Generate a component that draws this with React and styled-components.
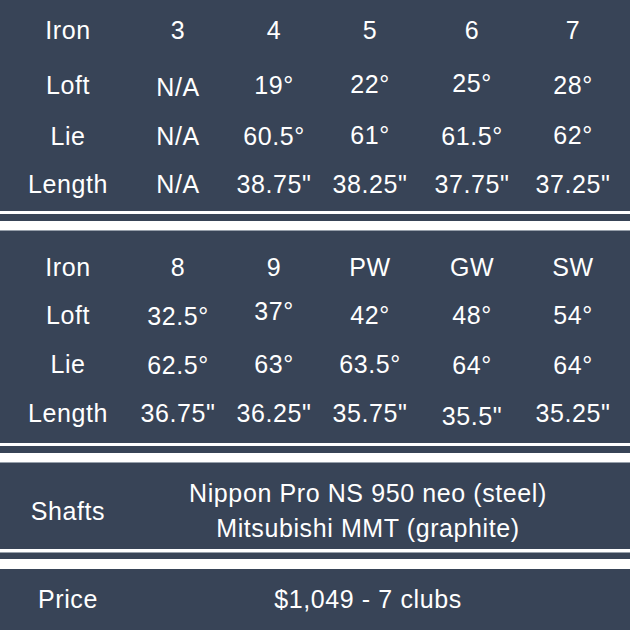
import React from "react";
import styled, { createGlobalStyle } from "styled-components";

const BG = "#384457";
const EDGE = "#97a0ab";

const Global = createGlobalStyle`
  html, body { margin: 0; padding: 0; background: ${BG}; }
  body { font-family: "Liberation Sans", Arial, sans-serif; }
`;

const Page = styled.div`
  width: 630px;
  height: 630px;
  background: ${BG};
  color: #ffffff;
  display: flex;
  flex-direction: column;
  overflow: hidden;
  font-family: "Liberation Sans", Arial, sans-serif;
  font-size: 25px;
  letter-spacing: 0.6px;
`;

const SpecTable = styled.div`
  flex: none;
  display: flex;
  flex-direction: column;
  box-sizing: border-box;
  height: ${(p) => p.$h}px;
  padding-top: ${(p) => p.$pt}px;
`;

const SpecRow = styled.div`
  flex: none;
  display: grid;
  grid-template-columns: 136px 84px 108px 84px 120px 82px;
  height: ${(p) => p.$h}px;
`;

const Cell = styled.div`
  display: flex;
  align-items: center;
  justify-content: center;
  white-space: nowrap;
  ${(p) => (p.$shift > 0 ? `padding-top: ${p.$shift * 2}px;` : "")}
  ${(p) => (p.$shift < 0 ? `padding-bottom: ${-p.$shift * 2}px;` : "")}
`;

const Divider = styled.div`
  flex: none;
  display: flex;
  flex-direction: column;
  gap: ${(p) => p.$gap}px;
`;

const Stripe = styled.div`
  height: ${(p) => p.$h}px;
  background: #ffffff;
  border-bottom: ${(p) => (p.$edge ? `1px solid ${EDGE}` : "none")};
`;

const InfoRow = styled.div`
  flex: none;
  display: grid;
  grid-template-columns: 136px 464px;
  align-items: center;
  box-sizing: border-box;
  height: ${(p) => p.$h}px;
  padding-top: ${(p) => p.$pt || 0}px;
`;

const InfoLabel = styled.div`
  text-align: center;
  white-space: nowrap;
`;

const InfoValue = styled.div`
  text-align: center;
  line-height: 35.5px;
  white-space: nowrap;
`;

const top = {
  h: 211,
  pt: 3,
  rows: [
    { h: 55, cells: ["Iron", "3", "4", "5", "6", "7"] },
    { h: 54, cells: ["Loft", ["N/A", 2], "19°", ["22°", -1], ["25°", -2], "28°"] },
    { h: 49, cells: ["Lie", "N/A", "60.5°", ["61°", -1], "61.5°", ["62°", -1]] },
    { h: 47, cells: ["Length", "N/A", "38.75\"", "38.25\"", "37.75\"", "37.25\""] },
  ],
};

const bottom = {
  h: 212,
  pt: 12,
  rows: [
    { h: 48, cells: ["Iron", "8", "9", "PW", "GW", "SW"] },
    { h: 48, cells: ["Loft", ["32.5°", 1], ["37°", -4], "42°", "48°", "54°"] },
    { h: 50, cells: ["Lie", ["62.5°", 1], "63°", "63.5°", ["64°", 1], ["64°", 1]] },
    { h: 49, cells: ["Length", "36.75\"", "36.25\"", "35.75\"", ["35.5\"", 3], "35.25\""] },
  ],
};

function Table({ data }) {
  return (
    <SpecTable $h={data.h} $pt={data.pt}>
      {data.rows.map((row, i) => (
        <SpecRow key={i} $h={row.h}>
          {row.cells.map((c, j) => {
            const [text, shift] = Array.isArray(c) ? c : [c, 0];
            return (
              <Cell key={j} $shift={shift}>
                {text}
              </Cell>
            );
          })}
        </SpecRow>
      ))}
    </SpecTable>
  );
}

export default function App() {
  return (
    <>
      <Global />
      <Page>
        <Table data={top} />
        <Divider $gap={7}>
          <Stripe $h={3} />
          <Stripe $h={9} $edge />
        </Divider>
        <Table data={bottom} />
        <Divider $gap={7}>
          <Stripe $h={3} />
          <Stripe $h={9} $edge />
        </Divider>
        <InfoRow $h={86} $pt={10}>
          <InfoLabel>Shafts</InfoLabel>
          <InfoValue>
            Nippon Pro NS 950 neo (steel)
            <br />
            Mitsubishi MMT (graphite)
          </InfoValue>
        </InfoRow>
        <Divider $gap={6}>
          <Stripe $h={3} $edge />
          <Stripe $h={10} />
        </Divider>
        <InfoRow $h={61}>
          <InfoLabel>Price</InfoLabel>
          <InfoValue>$1,049 - 7 clubs</InfoValue>
        </InfoRow>
      </Page>
    </>
  );
}
